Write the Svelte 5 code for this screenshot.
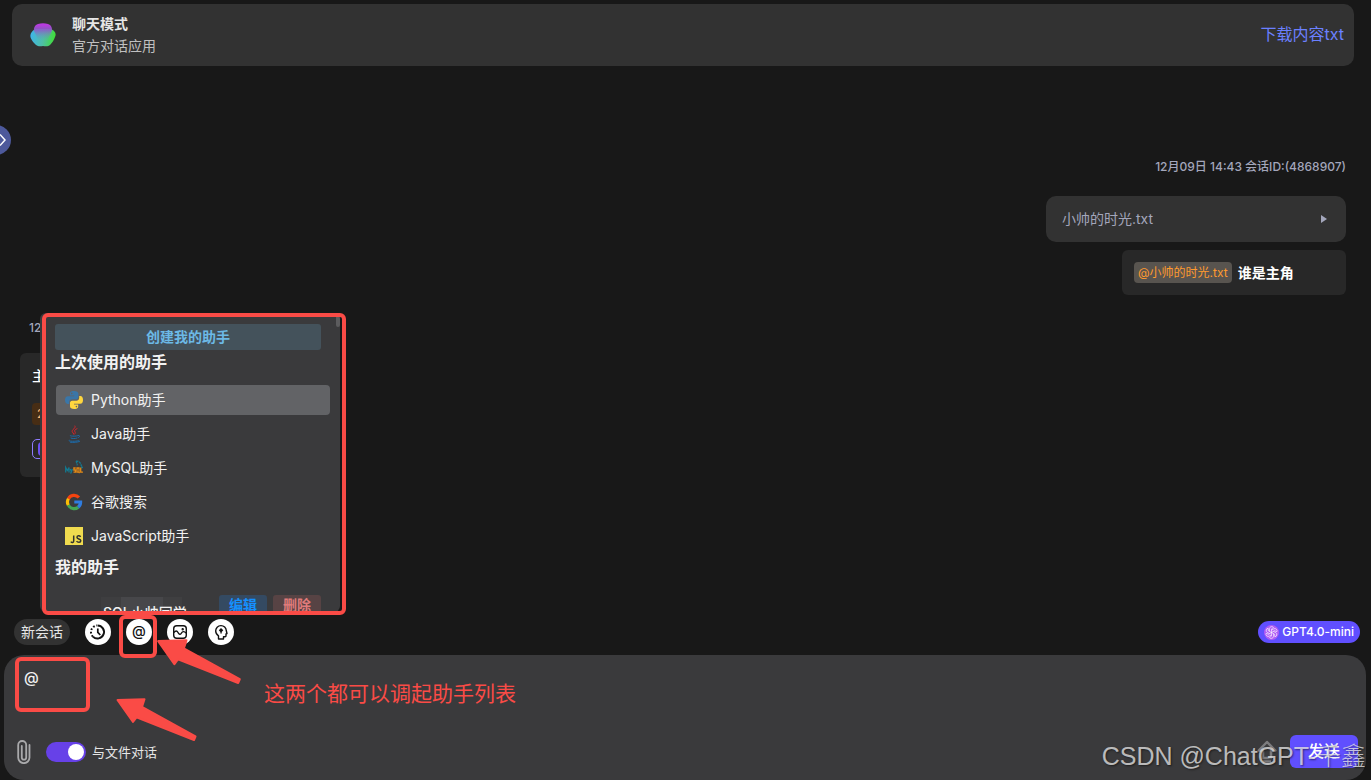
<script lang="ts">
  interface Assistant {
    id: string;
    name: string;
  }

  const recent: Assistant[] = [
    { id: "python", name: "Python助手" },
    { id: "java", name: "Java助手" },
    { id: "mysql", name: "MySQL助手" },
    { id: "google", name: "谷歌搜索" },
    { id: "js", name: "JavaScript助手" },
  ];

  let active = $state("python");
  let menuOpen = $state(true);
  let draft = $state("@");
  let fileChat = $state(true);
</script>

{#snippet arrow()}
  <svg width="82" height="44" viewBox="0 0 82 44" aria-hidden="true">
    <path
      d="M1.5 2 L28.5 1.3 L26 9 L79.5 38.5 L78 42 L20.5 19.3 L17 24 Z"
      fill="#fa4b46"
      stroke="#fa4b46"
      stroke-width="2"
      stroke-linejoin="round"
    />
  </svg>
{/snippet}

{#snippet logo(id: string)}
  <svg width="18" height="18" viewBox="0 0 18 18" aria-hidden="true">
    {#if id === "python"}
      <path
        d="M9 0C5.500 0 5 1.500 5 2.700V4.500H9.200V5.200H3C1 5.200 0 6.900 0 9.100s1 3.900 2.700 3.900H4.200V10.900C4.200 9.300 5.500 8.300 7 8.300h4.200c1.300 0 2.200-1 2.200-2.200V2.800C13.400 1 11.700 0 9 0z"
        fill="#3a76a8"
      />
      <circle cx="6.8" cy="2.4" r="0.8" fill="#626366" />
      <path
        d="M9.200 18c3.500 0 4-1.500 4-2.700V13.500H9V12.800h6.200c2 0 2.800-1.700 2.800-3.900S17 5 15.400 5H14.200V7.100c0 1.600-1.300 2.600-2.800 2.600H7.200C5.900 9.700 5 10.700 5 11.900v3.300C5 17 6.500 18 9.200 18z"
        fill="#ffd63e"
      />
      <circle cx="11.4" cy="15.6" r="0.8" fill="#626366" />
    {:else if id === "java"}
      <g fill="none" stroke-linecap="round">
        <path
          d="M10 1C11.200 3.400 6.600 4.400 7.200 6.600 7.500 7.700 8.800 8.200 8.900 9.200M12 3.700C9.800 4.700 9 5.600 10 6.900 10.600 7.700 10.200 8.500 9.700 9"
          stroke="#d5252c"
          stroke-width="1"
        />
        <path
          d="M5 10.500C4 11.300 11 11.400 12.500 10.800M13.400 10.400c1.800-.2 1.800 1.500-.4 2.300M6 13.100c1 .6 4.500.6 5.600.1M4 15.300c-2.500 1 7.500 1.600 10 .2M5.500 17.300c3 .3 7 0 9-.8"
          stroke="#1d6aa8"
          stroke-width="1"
        />
      </g>
    {:else if id === "mysql"}
      <path
        d="M11 2.200c2.500-.6 4.700 1.300 5.200 4.300l1.500 2-1.600.3M11 2.200l1 2.200.3 2"
        fill="none"
        stroke="#14788f"
        stroke-width="1.3"
        stroke-dasharray="2.500 0.700"
      />
      <path
        d="M.7 13.500V8.500l1.700 3L4 8.500v5M5.300 10l1.100 2.700L7.500 10M6.400 12.700l-.9 1.800"
        fill="none"
        stroke="#14788f"
        stroke-width="1.300"
      />
      <path
        d="M10.700 9H8.900v2h1.600v2.200H8.500M12 9h2v4.200h-2zM13.400 12.500l1.200 1.500M15.700 8.500v4.700h2.200"
        fill="none"
        stroke="#e48a16"
        stroke-width="1.300"
      />
    {:else if id === "google"}
      <g fill="none" stroke-width="3.2">
        <path d="M3.300 5.900A6.500 6.500 0 0 1 13.900 4.500" stroke="#f4430f" />
        <path d="M3.400 5.700A6.500 6.500 0 0 0 3.400 12.300" stroke="#fbbc05" />
        <path d="M3.300 12.100A6.500 6.500 0 0 0 13.200 14.200" stroke="#43a653" />
        <path d="M9.300 9h6.300A6.500 6.500 0 0 1 13.100 14.200" stroke="#2f7de1" />
      </g>
    {:else}
      <rect width="18" height="18" fill="#f0db4f" />
      <g fill="none" stroke="#323330" stroke-width="1.5">
        <path d="M8.700 8.500v5.600c0 1.700-2 1.900-2.800.5" />
        <path
          d="M15.600 9.800c-1-1.500-3.700-1.200-3.600.6.100 1.800 3.800 1.300 3.800 3.400 0 1.900-3.200 2-4.200.2"
        />
      </g>
    {/if}
  </svg>
{/snippet}

<div class="page">
  <header class="topbar">
    <svg class="app-logo" width="26" height="24" viewBox="0 0 26 24" aria-hidden="true">
      <defs>
        <linearGradient id="petals" x1="0" y1="0.6" x2="1" y2="0.7">
          <stop offset="0" stop-color="#3fb4e8" />
          <stop offset="0.5" stop-color="#4fc0a4" />
          <stop offset="1" stop-color="#3fe02c" />
        </linearGradient>
        <linearGradient id="crown" x1="0" y1="0" x2="0" y2="1">
          <stop offset="0.1" stop-color="#b93be0" />
          <stop offset="0.4" stop-color="#8a62c8" stop-opacity="0.9" />
          <stop offset="1" stop-color="#5aa9b5" stop-opacity="0" />
        </linearGradient>
      </defs>
      <path
        d="M6 6 20 6C24 7 27 10 25 14c-1 3-3 6-5 8-1.500 1.500-4 1.500-7 1-3 .5-5 .5-7-1C4 20 2 18 1 15.500-1 12 2 7 6 6z"
        fill="url(#petals)"
      />
      <path
        d="M8 1c3-1 7-1 10 0 3 .8 4.500 4 4 7l-5 10H9L4 8C3.500 5 5 2 8 1z"
        fill="url(#crown)"
      />
    </svg>
    <div class="titles">
      <h1>聊天模式</h1>
      <p>官方对话应用</p>
    </div>
    <a class="download" href="#download">下载内容txt</a>
  </header>

  <button class="drawer-knob" aria-label="展开侧栏">
    <svg width="6" height="14" viewBox="0 0 6 14" aria-hidden="true">
      <path d="M0 1.500 5 7 0 12.500" fill="none" stroke="#fff" stroke-width="1.500" />
    </svg>
  </button>

  <main class="chat">
    <section class="msg mine">
      <div class="meta">12月09日 14:43 会话ID:(4868907)</div>
      <button class="file">
        <span>小帅的时光.txt</span>
        <svg width="6" height="8" viewBox="0 0 6 8" aria-hidden="true">
          <path d="M0 0 6 4 0 8z" fill="#a3a6bb" />
        </svg>
      </button>
      <div class="bubble">
        <span class="mention">@小帅的时光.txt</span>
        <span>谁是主角</span>
      </div>
    </section>

    <section class="msg reply">
      <div class="meta">12</div>
      <div class="bubble">
        <span>主</span>
        <span class="cost">2</span>
        <span class="badge"><i></i></span>
      </div>
    </section>

    {#if menuOpen}
      <div class="menu-wrap">
        <div class="menu">
          <button class="create">创建我的助手</button>
          <h2>上次使用的助手</h2>
          <ul>
            {#each recent as item (item.id)}
              <li>
                <button
                  class="assistant"
                  class:active={active === item.id}
                  onclick={() => (active = item.id)}
                >
                  {@render logo(item.id)}
                  <span>{item.name}</span>
                </button>
              </li>
            {/each}
          </ul>
          <h2>我的助手</h2>
          <div class="own">
            <span class="own-icon"></span>
            <span class="own-name">SQL小帅同学</span>
            <button class="edit">编辑</button>
            <button class="remove">删除</button>
          </div>
          <span class="thumb"></span>
        </div>
        <div class="mark mark-menu"></div>
      </div>
    {/if}
  </main>

  <div class="tools">
    <button class="new-chat">新会话</button>
    <button class="round" aria-label="历史记录">
      <svg width="18" height="18" viewBox="0 0 18 18" fill="none" stroke="#111" aria-hidden="true">
        <path d="M8.500 2.500a6.500 6.500 0 1 1-4.600 11.100" stroke-width="2" />
        <path d="M3.900 13.600A6.500 6.500 0 0 1 8 2.500" stroke-width="2" stroke-dasharray="1.800 1.700" />
        <path d="M8.800 5.500V9.300L11.300 12" stroke-width="1.700" />
      </svg>
    </button>
    <div class="at-wrap">
      <button class="round at" aria-label="助手列表" onclick={() => (menuOpen = !menuOpen)}>@</button>
      <div class="mark mark-at"></div>
    </div>
    <button class="round" aria-label="图片">
      <svg width="16" height="16" viewBox="0 0 16 16" fill="none" stroke="#111" stroke-width="1.4" aria-hidden="true">
        <rect x="1.700" y="1.700" width="12.600" height="12.600" rx="3" />
        <path d="M2 8.500c1.500-2 3-2 4 0s2.500 2.500 3.500.5 3-1.800 4.500.2" />
        <circle cx="10.700" cy="5.200" r="0.500" fill="#111" />
      </svg>
    </button>
    <button class="round" aria-label="灵感">
      <svg width="16" height="16" viewBox="0 0 16 16" fill="none" stroke="#111" stroke-width="1.4" aria-hidden="true">
        <path d="M5.500 15v-3.200C3.500 10.500 2.700 9 2.700 7a5.300 5.300 0 0 1 10.600-.2L14 9.500 13 10v1.700c0 .8-.6 1.200-2.500 1.100V15z" stroke-linejoin="round" />
        <path d="M8 4 10.300 6.200 8.700 8v1.500H7.400V8L5.800 6.200z" fill="#111" stroke="none" />
      </svg>
    </button>
    <button class="model">
      <svg width="15" height="15" viewBox="0 0 15 15" aria-hidden="true">
        <circle cx="7.5" cy="7.5" r="7.500" fill="#b05cf5" />
        <g fill="none" stroke="#fff" stroke-opacity="0.85" stroke-width="0.700">
          {#each [0, 60, 120, 180, 240, 300] as angle}
            <path
              d="M5.500 6.400V3.700a2.200 2.200 0 0 1 4-1.200L7.500 3.900V7.500"
              transform="rotate({angle} 7.500 7.500)"
            />
          {/each}
        </g>
      </svg>
      <span>GPT4.0-mini</span>
    </button>
    <div class="pointer pointer-at">{@render arrow()}</div>
  </div>

  <footer class="composer">
    <textarea aria-label="输入消息" rows="2" bind:value={draft}></textarea>
    <div class="actions">
      <button class="clip" aria-label="上传文件">
        <svg width="14" height="24" viewBox="0 0 14 24" fill="none" stroke="#a9a9ab" stroke-width="1.800" stroke-linecap="round" aria-hidden="true">
          <path d="M12.500 5v12.500a5.200 5.200 0 0 1-11.300 0V5a4 4 0 0 1 8 0v12.500a2.200 2.200 0 0 1-4.400 0V6" />
        </svg>
      </button>
      <label class="switch">
        <input type="checkbox" bind:checked={fileChat} />
        <span class="track"></span>
        <span>与文件对话</span>
      </label>
      <button class="upward" aria-label="回到顶部">
        <svg width="20" height="24" viewBox="0 0 20 24" fill="none" stroke="#7c7c7e" stroke-width="2.500" stroke-linejoin="round" aria-hidden="true">
          <path d="M10 2 18.300 10.500H14V18H6V10.500H1.700zM6 21.500H14" />
        </svg>
      </button>
      <button class="send">发送</button>
    </div>
    <div class="mark mark-input"></div>
    <div class="pointer pointer-input">{@render arrow()}</div>
    <p class="note">这两个都可以调起助手列表</p>
    <div class="watermark">CSDN @ChatGPT-千鑫</div>
  </footer>
</div>

<style>
  :global(body) {
    margin: 0;
    background: #181818;
  }

  .page {
    position: relative;
    display: flex;
    flex-direction: column;
    min-height: 100vh;
    box-sizing: border-box;
    padding-top: 4px;
    overflow: hidden;
    background: #181818;
    color: #f2f2f2;
    font-family: Inter, "Noto Sans CJK SC", sans-serif;
    font-size: 14px;
    line-height: 20px;
  }

  button,
  textarea {
    font: inherit;
    color: inherit;
    border: none;
    padding: 0;
    margin: 0;
    background: none;
  }

  button {
    cursor: pointer;
  }

  svg {
    display: block;
    flex-shrink: 0;
  }

  h1,
  h2,
  p,
  ul {
    margin: 0;
    padding: 0;
    list-style: none;
  }

  .topbar {
    display: flex;
    align-items: center;
    margin: 0 17px 0 12px;
    padding: 9px 10px 9px 18px;
    border-radius: 10px;
    background: #323232;
  }

  .titles {
    flex: 1;
    margin-left: 16px;
    line-height: 22px;
  }

  .titles h1 {
    font-size: 14px;
    font-weight: 700;
    color: #e6e6e6;
  }

  .titles p {
    color: #c0c0c0;
  }

  .download {
    padding-bottom: 2px;
    font-size: 16px;
    color: #6b80ff;
    text-decoration: none;
  }

  .drawer-knob {
    position: absolute;
    left: -19px;
    top: 125px;
    width: 30px;
    height: 30px;
    padding-left: 19px;
    border-radius: 50%;
    background: #4d599b;
  }

  .chat {
    position: relative;
    flex: 1;
    padding: 91px 25px 0 20px;
  }

  .msg {
    display: flex;
    flex-direction: column;
  }

  .meta {
    font-size: 12px;
    font-weight: 500;
    color: #a3a6bb;
  }

  .bubble {
    box-sizing: border-box;
    padding: 12px;
    border-radius: 6px;
    background: #282828;
    font-weight: 500;
    color: #fff;
  }

  .mine {
    align-items: flex-end;
  }

  .file {
    display: flex;
    align-items: center;
    justify-content: space-between;
    box-sizing: border-box;
    width: 300px;
    margin: 19px 0 8px;
    padding: 13px 19px 13px 16px;
    border-radius: 10px;
    background: #323232;
    color: #a3a6bb;
  }

  .mine .bubble {
    display: flex;
    align-items: center;
    gap: 6px;
    width: 224px;
    font-weight: 700;
  }

  .mention {
    padding: 0 4px;
    border-radius: 4px;
    background: #58544f;
    color: #ff9a2e;
    font-size: 12px;
    font-weight: 400;
    line-height: 21px;
  }

  .reply {
    align-items: flex-start;
    margin-top: 23px;
  }

  .reply .meta {
    margin-left: 9px;
  }

  .reply .bubble {
    display: flex;
    flex-direction: column;
    align-items: flex-start;
    margin-top: 15px;
    padding: 13px 12px 18px;
  }

  .cost {
    margin: 17px 0 14px;
    padding: 0 5px;
    border-radius: 4px;
    background: #472d14;
    color: #ffb877;
    font-size: 12px;
    font-weight: 400;
    line-height: 22px;
  }

  .badge {
    display: flex;
    padding: 2px 5px;
    border: 1px solid #8f7bff;
    border-radius: 5px;
  }

  .badge i {
    width: 14px;
    height: 14px;
    border-radius: 4px;
    background: #6c4ff0;
  }

  /* Assistant menu, floats over the conversation */
  .menu-wrap {
    position: absolute;
    left: 40px;
    bottom: 7px;
    width: 300px;
  }

  .menu {
    position: relative;
    height: 299px;
    box-sizing: border-box;
    padding: 11px 10px 0 15px;
    border-radius: 6px;
    overflow: hidden;
    background: #3a3a3c;
  }

  .create {
    display: block;
    width: calc(100% - 9px);
    border-radius: 3px;
    background: #44525b;
    color: #6cb9e6;
    font-weight: 700;
    line-height: 26px;
  }

  .menu h2 {
    font-size: 16px;
    font-weight: 700;
    line-height: 24px;
  }

  .menu ul {
    display: flex;
    flex-direction: column;
    gap: 4px;
    margin: 11px 0 4px 1px;
  }

  .assistant {
    display: flex;
    align-items: center;
    gap: 8px;
    width: 100%;
    padding: 5px 9px;
    border-radius: 4px;
    text-align: left;
  }

  .assistant.active {
    background: #626366;
  }

  .own {
    display: flex;
    align-items: flex-start;
    gap: 6px;
    margin: 16px 9px 0 10px;
  }

  .own-icon {
    width: 30px;
    height: 20px;
  }

  .own-name {
    flex: 1;
    margin-top: 2px;
    padding-left: 2px;
    background: linear-gradient(
      90deg,
      #3e3e40 20px,
      #47474a 20px 62px,
      #3f3f41 62px 81px,
      transparent 81px
    );
    font-weight: 500;
    line-height: 32px;
  }

  .edit,
  .remove {
    width: 48px;
    border-radius: 3px;
    font-weight: 700;
    line-height: 20px;
  }

  .edit {
    background: #344a62;
    color: #1590ff;
  }

  .remove {
    background: #574344;
    color: #e07b7b;
  }

  .thumb {
    position: absolute;
    top: 0;
    right: 0;
    width: 4px;
    height: 14px;
    border-radius: 2px;
    background: #5c5c5e;
  }

  /* Red callouts */
  .mark {
    position: absolute;
    box-sizing: border-box;
    border: 4px solid #fa4b46;
    border-radius: 6px;
    pointer-events: none;
  }

  .mark-menu {
    top: 0;
    left: 2px;
    width: 304px;
    height: 302px;
  }

  .mark-at {
    top: -4px;
    left: -7px;
    width: 38px;
    height: 43px;
  }

  .mark-input {
    top: 2px;
    left: 11px;
    width: 75px;
    height: 55px;
  }

  .pointer {
    position: absolute;
    z-index: 2;
    pointer-events: none;
  }

  .pointer-at {
    top: 20px;
    left: 156px;
  }

  .pointer-at svg {
    width: 87px;
    height: 46px;
  }

  .pointer-input {
    top: 43px;
    left: 112px;
  }

  .note {
    position: absolute;
    top: 25px;
    left: 260px;
    font-size: 21px;
    line-height: 28px;
    color: #fa4b46;
  }

  .tools {
    position: relative;
    z-index: 1;
    display: flex;
    align-items: center;
    gap: 15px;
    margin-bottom: 10px;
    padding: 0 11px 0 14px;
  }

  .new-chat {
    padding: 0 7px;
    border-radius: 13px;
    background: #323232;
    color: #e6e6e6;
    line-height: 26px;
  }

  .round {
    display: flex;
    align-items: center;
    justify-content: center;
    width: 26px;
    height: 26px;
    border-radius: 50%;
    background: #fff;
    color: #111;
  }

  .at {
    padding-bottom: 2px;
    font-weight: 500;
  }

  .at-wrap {
    position: relative;
  }

  .model {
    display: flex;
    align-items: center;
    gap: 3px;
    margin-left: auto;
    padding: 0 6px;
    border-radius: 11px;
    background: #604fff;
    color: #fff;
    font-size: 12px;
    font-weight: 500;
    line-height: 22px;
  }

  .composer {
    position: relative;
    display: flex;
    flex-direction: column;
    margin: 0 5px 0 4px;
    padding: 12px 8px 12px 13px;
    border-radius: 20px;
    background: #3a3a3c;
  }

  textarea {
    display: block;
    height: 68px;
    padding: 0 7px;
    outline: none;
    resize: none;
    font-size: 15px;
    font-weight: 500;
    line-height: 22px;
  }

  .actions {
    display: flex;
    align-items: center;
  }

  .switch {
    display: flex;
    align-items: center;
    gap: 6px;
    margin-left: 15px;
    font-size: 13px;
    color: #e6e6e6;
    cursor: pointer;
  }

  .switch input {
    position: absolute;
    opacity: 0;
  }

  .track {
    box-sizing: border-box;
    width: 40px;
    height: 20px;
    padding: 2px;
    border-radius: 10px;
    background: #6d6d70;
  }

  .track::after {
    content: "";
    display: block;
    width: 16px;
    height: 16px;
    border-radius: 50%;
    background: #fff;
  }

  input:checked + .track {
    background: #6741e8;
  }

  input:checked + .track::after {
    margin-left: auto;
  }

  .upward {
    margin-left: auto;
  }

  .send {
    width: 68px;
    margin-left: 13px;
    border-radius: 6px;
    background: #604fff;
    color: #fff;
    font-size: 16px;
    font-weight: 500;
    line-height: 33px;
  }

  .watermark {
    position: absolute;
    right: 0;
    bottom: 8px;
    color: rgba(235, 235, 235, 0.75);
    font-family: "Liberation Sans", "Noto Sans CJK SC", sans-serif;
    font-size: 25px;
    font-weight: 300;
    line-height: 32px;
    white-space: nowrap;
    text-shadow: 1px 1px 2px rgba(0, 0, 0, 0.5);
    pointer-events: none;
  }
</style>
